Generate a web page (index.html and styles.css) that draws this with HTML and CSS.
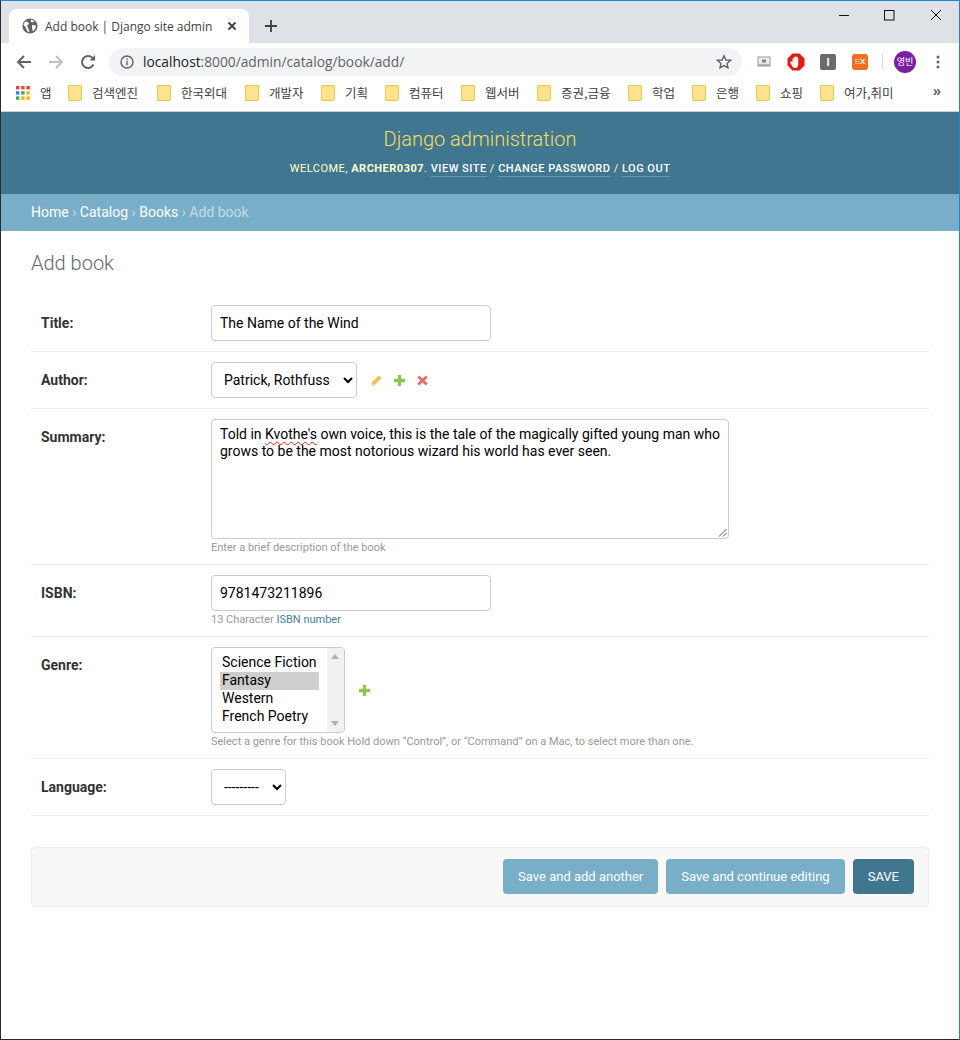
FILE: index.html
```html
<!DOCTYPE html>
<html lang="en">
<head>
    <meta charset="UTF-8">
    <title>Add book | Django site admin</title>
    <link rel="stylesheet" href="styles.css">
</head>
<body>
<div class="window">
    <div class="tabstrip">
        <div class="tab">
            <svg class="globe" width="16" height="16" viewBox="0 0 16 16"><circle cx="8" cy="8" r="7.6" fill="#5f6368"/><path d="M3 3.500l3 .5 1 2-2 1.500L6.500 11l1 3.500-2-1L3.500 9 1.500 7zM9 1.500l3.500 1.500-1.500 1.500-2-.5zM10 7l4 .5-.5 3-2.500 3-1-3z" fill="#fff"/></svg>
            <span class="tab-title">Add book | Django site admin</span>
            <svg class="tab-x" width="10" height="10" viewBox="0 0 10 10"><path d="M1.500 1.500l7 7M8.500 1.500l-7 7" stroke="#3c4043" stroke-width="1.800"/></svg>
        </div>
        <svg class="newtab" width="14" height="14" viewBox="0 0 14 14"><path d="M7 1v12M1 7h12" stroke="#3c4043" stroke-width="1.800"/></svg>
        <div class="winbtns">
            <svg width="12" height="12" viewBox="0 0 12 12"><path d="M1 6.500h10" stroke="#111"/></svg>
            <svg width="12" height="12" viewBox="0 0 12 12"><rect x=".5" y="1.500" width="9.500" height="9.500" fill="none" stroke="#111"/></svg>
            <svg width="12" height="12" viewBox="0 0 12 12"><path d="M1 1l10 10M11 1L1 11" stroke="#111"/></svg>
        </div>
    </div>

    <div class="toolbar">
        <svg width="16" height="16" viewBox="0 0 16 16"><path d="M15 8H2M8 2L2 8l6 6" fill="none" stroke="#5f6368" stroke-width="2"/></svg>
        <svg width="16" height="16" viewBox="0 0 16 16"><path d="M1 8h13M8 2l6 6-6 6" fill="none" stroke="#bcc0c4" stroke-width="2"/></svg>
        <svg width="16" height="16" viewBox="0 0 16 16"><path d="M13.500 10.500A6 6 0 1 1 12.300 3.800" fill="none" stroke="#5f6368" stroke-width="2"/><path d="M9.500 6.500H15V1z" fill="#5f6368"/></svg>
        <div class="omnibox">
            <svg width="14" height="14" viewBox="0 0 14 14"><circle cx="7" cy="7" r="6" fill="none" stroke="#5f6368" stroke-width="1.400"/><path d="M7 6v4.200M7 3.500v1.500" stroke="#5f6368" stroke-width="1.400"/></svg>
            <span class="url">localhost<span class="url-path">:8000/admin/catalog/book/add/</span></span>
            <svg class="star" width="16" height="16" viewBox="0 0 16 16"><path d="M8 1.800l1.900 4.200 4.500.4-3.400 3 1 4.500L8 11.600l-4 2.300 1-4.500-3.400-3 4.500-.4z" fill="none" stroke="#5f6368" stroke-width="1.400"/></svg>
        </div>
        <div class="extensions">
            <svg width="16" height="16" viewBox="0 0 16 16"><rect x="2" y="3" width="12" height="9" fill="#e8eaed" stroke="#9aa0a6"/><rect x="6" y="5.500" width="4" height="3" fill="#80868b"/><path d="M2 11h12" stroke="#80868b"/></svg>
            <svg width="18" height="18" viewBox="0 0 18 18"><path d="M5.500 .5h7L17.500 5.500v7L12.500 17.500h-7L.5 12.500v-7z" fill="#e31b13"/><path d="M5.500 9.500V6c0-1.100 1.400-1.100 1.400 0V4.500c0-1.100 1.400-1.100 1.400 0V4c0-1.100 1.400-1.100 1.400 0v1c0-1.100 1.500-1.100 1.500 0v6.500c0 2-1.300 3.500-3.200 3.500-1.700 0-2.500-1-3.200-2.400L3.300 9.800c-.5-1.100.9-1.700 1.500-.8z" fill="#fff"/></svg>
            <span class="ext-i">I</span>
            <span class="ext-ex"><span class="ext-ex-e">E</span>X</span>
            <span class="ext-sep"></span>
            <span class="avatar">영빈</span>
            <svg class="dots" width="4" height="14" viewBox="0 0 4 14"><circle cx="2" cy="2" r="1.500" fill="#5f6368"/><circle cx="2" cy="7" r="1.500" fill="#5f6368"/><circle cx="2" cy="12" r="1.500" fill="#5f6368"/></svg>
        </div>
    </div>

    <div class="bookmarks">
        <span class="bm bm-apps">
            <svg width="14" height="14" viewBox="0 0 14 14">
                <rect x="0" y="0" width="3.400" height="3.400" fill="#e8453c"/><rect x="5.200" y="0" width="3.400" height="3.400" fill="#e8453c"/><rect x="10.400" y="0" width="3.400" height="3.400" fill="#e8453c"/>
                <rect x="0" y="5.200" width="3.400" height="3.400" fill="#3b7de8"/><rect x="5.200" y="5.200" width="3.400" height="3.400" fill="#3cab5b"/><rect x="10.400" y="5.200" width="3.400" height="3.400" fill="#f4b400"/>
                <rect x="0" y="10.400" width="3.400" height="3.400" fill="#3cab5b"/><rect x="5.200" y="10.400" width="3.400" height="3.400" fill="#f4b400"/><rect x="10.400" y="10.400" width="3.400" height="3.400" fill="#f4b400"/>
            </svg>앱</span>
        <span class="bm bm-folder bm-w89">검색엔진</span>
        <span class="bm bm-folder bm-w88">한국외대</span>
        <span class="bm bm-folder bm-w76">개발자</span>
        <span class="bm bm-folder bm-w64">기획</span>
        <span class="bm bm-folder bm-w76">컴퓨터</span>
        <span class="bm bm-folder bm-w76">웹서버</span>
        <span class="bm bm-folder bm-w91">증권,금융</span>
        <span class="bm bm-folder bm-w64">학업</span>
        <span class="bm bm-folder bm-w64">은행</span>
        <span class="bm bm-folder bm-w64">쇼핑</span>
        <span class="bm bm-folder">여가,취미</span>
        <span class="bm-more">»</span>
    </div>

    <div class="page">
        <div class="header">
            <div class="branding">Django administration</div>
            <div class="user-tools">Welcome, <strong>archer0307</strong>. <a>View site</a> / <a>Change password</a> / <a>Log out</a></div>
        </div>
        <div class="breadcrumbs"><a>Home</a> › <a>Catalog</a> › <a>Books</a> › Add book</div>

        <div class="content">
            <h1>Add book</h1>
            <form>
                <div class="form-row">
                    <label>Title:</label>
                    <div class="field"><input class="vtext" type="text" value="The Name of the Wind"></div>
                </div>
                <div class="form-row">
                    <label>Author:</label>
                    <div class="field inline">
                        <select class="select-author"><option>Patrick, Rothfuss</option></select>
                        <span class="related">
                            <svg width="13" height="13" viewBox="0 0 13 13"><path d="M1 12l.8-3.400L8.800 1.600l2.600 2.600-7 7z" fill="#f0c24e"/><path d="M1 12l.8-3.400 2.600 2.600z" fill="#f9e3a8"/></svg>
                            <svg width="13" height="13" viewBox="0 0 13 13"><path d="M4.800 1h3.400v3.800H12v3.400H8.200V12H4.800V8.200H1V4.800h3.800z" fill="#8ec454"/></svg>
                            <svg width="13" height="13" viewBox="0 0 13 13"><path d="M3.300 1.500L6.500 4.600l3.200-3.100 2 2-3.200 2.900 3.200 3.100-2 2-3.200-3.100-3.200 3.100-2-2 3.200-3.100-3.200-2.900z" fill="#e36d6d"/></svg>
                        </span>
                    </div>
                </div>
                <div class="form-row">
                    <label>Summary:</label>
                    <div class="field">
                        <div class="vlarge">Told in <span class="misspelled">Kvothe's</span> own voice, this is the tale of the magically gifted young man who<br>grows to be the most notorious wizard his world has ever seen.<svg class="grip" width="9" height="9" viewBox="0 0 9 9"><path d="M1 8.500L8.500 1M5 8.500L8.500 5" stroke="#555" fill="none"/></svg></div>
                        <p class="help">Enter a brief description of the book</p>
                    </div>
                </div>
                <div class="form-row">
                    <label>ISBN:</label>
                    <div class="field">
                        <input class="vtext" type="text" value="9781473211896">
                        <p class="help">13 Character <a>ISBN number</a></p>
                    </div>
                </div>
                <div class="form-row">
                    <label>Genre:</label>
                    <div class="field">
                        <div class="inline">
                            <div class="multi">
                                <ul class="multi-list">
                                    <li>Science Fiction</li>
                                    <li class="picked">Fantasy</li>
                                    <li>Western</li>
                                    <li>French Poetry</li>
                                </ul>
                                <div class="multi-scroll"><i class="arrow-up"></i><i class="arrow-down"></i></div>
                            </div>
                            <span class="related">
                                <svg width="13" height="13" viewBox="0 0 13 13"><path d="M4.800 1h3.400v3.800H12v3.400H8.200V12H4.800V8.200H1V4.800h3.800z" fill="#8ec454"/></svg>
                            </span>
                        </div>
                        <p class="help">Select a genre for this book Hold down “Control”, or “Command” on a Mac, to select more than one.</p>
                    </div>
                </div>
                <div class="form-row">
                    <label>Language:</label>
                    <div class="field"><select class="select-lang"><option>---------</option></select></div>
                </div>
                <div class="submit-row">
                    <button type="button" class="btn">Save and add another</button>
                    <button type="button" class="btn">Save and continue editing</button>
                    <button type="button" class="btn btn-default">SAVE</button>
                </div>
            </form>
        </div>
    </div>
</div>
</body>
</html>
```

FILE: styles.css
```css
* { box-sizing: border-box; }
html, body { margin: 0; padding: 0; height: 100%; background: #fff; }
body { font-family: Roboto, "Noto Sans CJK KR", sans-serif; color: #333; font-size: 14px; overflow: hidden; }
.window { height: 1040px; border: 1px solid #2b2b2b; border-top: 1px solid #1a86d8; border-right-color: #1a86d8; display: flex; flex-direction: column; }

/* browser chrome */
.tabstrip { height: 42px; background: #dee1e6; display: flex; align-items: flex-end; padding-left: 8px; position: relative; }
.tab { width: 240px; height: 34px; background: #fff; border-radius: 8px 8px 0 0; display: flex; align-items: center; padding: 0 12px 0 13px; }
.tab-title { font: 12px "Open Sans", sans-serif; color: #3c4043; margin-left: 7px; flex: 1; white-space: nowrap; }
.newtab { margin: 0 0 10px 15px; }
.winbtns { position: absolute; top: 8px; right: 17px; display: flex; gap: 34px; }
.toolbar { height: 37px; display: flex; align-items: center; padding-left: 15px; gap: 16px; background: #fff; }
.omnibox { width: 633px; height: 28px; margin-left: -3px; background: #f1f3f4; border-radius: 14px; display: flex; align-items: center; padding: 0 10px 0 11px; }
.url { font: 13.75px "Open Sans", sans-serif; color: #202124; margin-left: 9px; flex: 1; }
.url-path { color: #5f6368; }
.extensions { display: flex; align-items: center; margin-left: -2px; gap: 15px; }
.ext-i { width: 16px; height: 16px; background: #6b6b6b; border-radius: 2px; color: #fff; font: bold 11px/16px "Liberation Sans", sans-serif; text-align: center; }
.ext-ex { width: 16px; height: 16px; background: #f26f21; border-radius: 3px; color: #fff; font: bold 8px/16px "Liberation Sans", sans-serif; text-align: center; margin-left: 1px; }
.ext-ex-e { color: #f9b98f; }
.ext-sep { width: 1px; height: 16px; background: #dadce0; margin-left: -1px; margin-right: -4px; }
.avatar { width: 22px; height: 22px; border-radius: 50%; background: #7b1fa2; color: #fff; font: 9px/22px "Noto Sans CJK KR", sans-serif; text-align: center; }
.dots { margin-left: 5px; }
.bookmarks { height: 32px; display: flex; align-items: center; padding: 0 0 6px 15px; background: #fff; border-bottom: 1px solid #d0d2d5; font: 12.5px "Noto Sans CJK KR", sans-serif; color: #3c4043; position: relative; }
.bm { display: flex; align-items: center; white-space: nowrap; }
.bm-apps { width: 52px; gap: 10px; }
.bm-folder { gap: 10px; }
.bm-folder::before { content: ""; width: 12px; height: 14px; background: #fee38f; border: 1px solid #edc84d; border-radius: 1px 1px 2px 1px; }
.bm-w89 { width: 89px; }
.bm-w88 { width: 88px; }
.bm-w76 { width: 76px; }
.bm-w64 { width: 64px; }
.bm-w91 { width: 91px; }
.bm-more { position: absolute; right: 18px; top: 2px; font: bold 15px "Liberation Sans", sans-serif; color: #5f6368; }

/* django admin */
.page { flex: 1; }
.header { height: 82px; background: #417690; text-align: center; padding-top: 15px; }
.branding { font-size: 20px; font-weight: 300; line-height: 24px; color: #f5dd5d; }
.user-tools { margin-top: 9px; font-size: 11px; line-height: 18px; letter-spacing: .5px; text-transform: uppercase; color: #ffc; }
.user-tools strong { font-weight: 700; }
.user-tools a { color: #fff; border-bottom: 1px solid rgba(255, 255, 255, .25); font-weight: 500; padding-bottom: 1px; }
.breadcrumbs { height: 37px; background: #79aec8; padding: 0 30px; line-height: 37px; font-size: 14px; color: #c4dce8; }
.breadcrumbs a { color: #fff; }
.content { padding: 20px 30px 0; }
h1 { margin: 0 0 20px; font-size: 20px; font-weight: 300; line-height: 24px; color: #666; }
.form-row { display: flex; padding: 10px; border-bottom: 1px solid #eee; }
.form-row label { width: 170px; font-weight: 700; font-size: 14px; color: #333; padding-top: 9px; line-height: 18px; flex: none; }
.field { flex: 1; }
.inline { display: flex; align-items: center; }
input, select, .vlarge, .multi { font-family: Roboto, sans-serif; font-size: 14px; color: #000; background: #fff; border: 1px solid #ccc; border-radius: 4px; }
.vtext { display: block; width: 280px; height: 36px; padding: 0 8px; }
select { height: 36px; padding: 0 0 0 8px; }
.select-author { width: 146px; }
.select-lang { width: 75px; }
.related { display: flex; gap: 10px; margin-left: 13px; align-items: center; }
.vlarge { width: 518px; height: 120px; padding: 6px 8px; line-height: 17px; position: relative; }
.misspelled { text-decoration: underline wavy #e0201b 1px; text-underline-offset: 2px; }
.grip { position: absolute; right: 1px; bottom: 1px; }
.help { margin: 2px 0 0; font-size: 11px; line-height: 13px; color: #999; }
.help a { color: #447e9b; }
.multi { width: 134px; height: 86px; display: flex; overflow: hidden; }
.multi-list { list-style: none; margin: 0; padding: 6px 0 0 8px; flex: 1; }
.multi-list li { height: 18px; line-height: 16px; padding-left: 2px; width: 99px; white-space: nowrap; }
.multi-list .picked { background: #cecece; }
.multi-scroll { width: 17px; background: #f1f1f1; position: relative; }
.arrow-up, .arrow-down { position: absolute; left: 4px; width: 0; height: 0; border-left: 4px solid transparent; border-right: 4px solid transparent; }
.arrow-up { top: 6px; border-bottom: 5px solid #b0b0b0; }
.arrow-down { bottom: 6px; border-top: 5px solid #b0b0b0; }
.submit-row { margin-top: 31px; height: 60px; background: #f8f8f8; border: 1px solid #eee; border-radius: 4px; display: flex; justify-content: flex-end; align-items: flex-start; gap: 8px; padding: 11px 14px 0 0; }
.btn { height: 35px; border: 0; border-radius: 4px; background: #79aec8; color: #fff; font-family: Roboto, sans-serif; font-size: 13px; padding: 0 15px; }
.btn-default { background: #417690; }
```
